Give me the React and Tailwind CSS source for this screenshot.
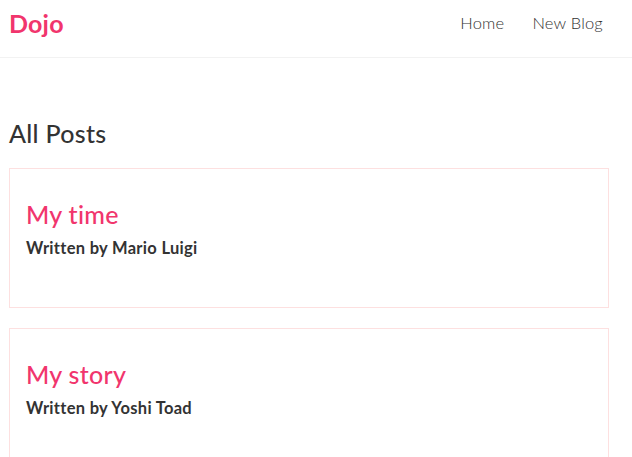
export default function App() {
  const posts = [
    { title: "My time", author: "Mario Luigi" },
    { title: "My story", author: "Yoshi Toad" },
  ];
  return (
    <div className="min-h-screen bg-white text-[#333]" style={{ fontFamily: "Lato, 'Noto Sans', sans-serif" }}>
      <nav className="border-b border-[#f2f2f2]">
        <div className="ml-[9px] w-[600px] h-[57px] flex items-start pt-[8px]">
          <h1 className="text-[25px] font-bold text-[#f1356d] leading-[30px] tracking-[0.2px]">Dojo</h1>
          <div className="ml-auto flex items-center h-[30px]">
            <a className="ml-[16px] px-[6px] text-[16.5px] font-light text-[#333] tracking-[0.2px]">Home</a>
            <a className="ml-[16px] px-[6px] text-[16.5px] font-light text-[#333] tracking-[0.2px]">New Blog</a>
          </div>
        </div>
      </nav>
      <main className="ml-[9px] w-[600px] pt-[60px]">
        <h2 className="text-[25px] font-medium leading-[30px] tracking-[0.3px] text-[#333]">All Posts</h2>
        <div className="mt-[20px] flex flex-col gap-[20px]">
          {posts.map((p) => (
            <div key={p.title} className="h-[140px] border border-[#fde0e0] px-[16px] pt-[31px]">
              <h2 className="text-[25px] font-medium leading-[29px] tracking-[0.3px] text-[#f1356d]">{p.title}</h2>
              <p className="mt-[10px] text-[16.5px] font-bold leading-[19px] tracking-[0.3px] text-[#333]">Written by {p.author}</p>
            </div>
          ))}
        </div>
      </main>
    </div>
  );
}
